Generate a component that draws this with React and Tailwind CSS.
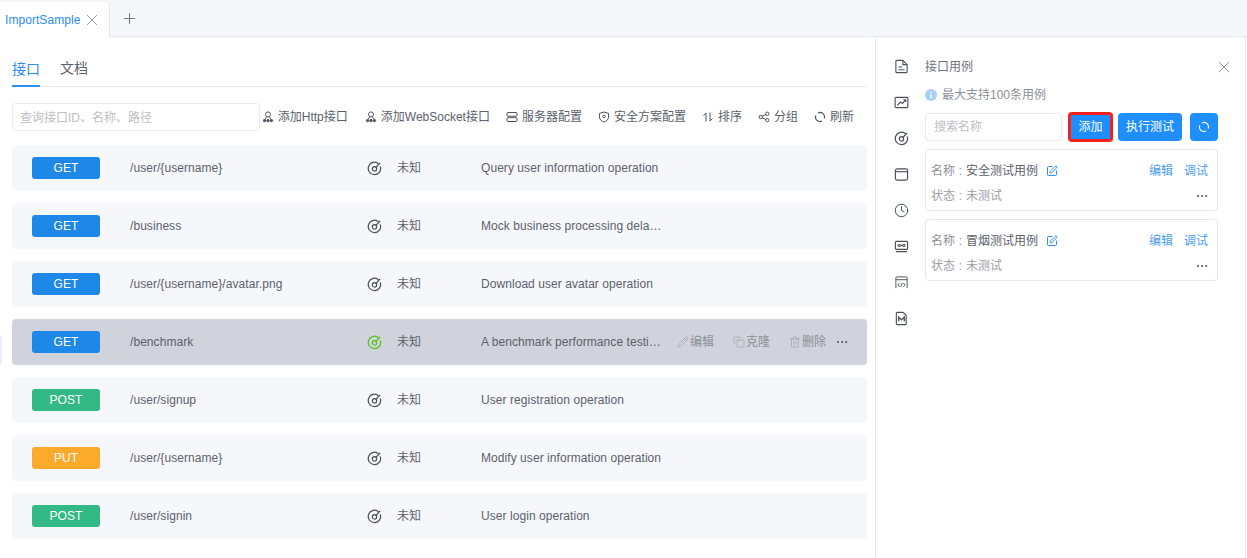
import { X, Plus, Pencil, Copy, Trash2, Ellipsis, SquarePen, Clock } from "lucide-react";

const FONT = "font-['Liberation_Sans','Noto_Sans_CJK_SC',sans-serif]";

const rows = [
  { method: "GET", path: "/user/{username}", desc: "Query user information operation" },
  { method: "GET", path: "/business", desc: "Mock business processing dela…" },
  { method: "GET", path: "/user/{username}/avatar.png", desc: "Download user avatar operation" },
  { method: "GET", path: "/benchmark", desc: "A benchmark performance testi…", active: true },
  { method: "POST", path: "/user/signup", desc: "User registration operation" },
  { method: "PUT", path: "/user/{username}", desc: "Modify user information operation" },
  { method: "POST", path: "/user/signin", desc: "User login operation" },
];

const methodColors = { GET: "bg-[#1e88e8]", POST: "bg-[#33b985]", PUT: "bg-[#fbaa2c]" };

function Target({ className }) {
  return (
    <svg viewBox="0 0 16 16" fill="none" stroke="currentColor" strokeWidth="1.3" strokeLinecap="round" className={className}>
      <path d="M11.8 2.6A6.6 6.6 0 1 0 14.3 6.2" />
      <circle cx="8" cy="8.4" r="2.3" />
      <path d="M9.6 6.8 13.6 2.4" />
    </svg>
  );
}

function People({ className }) {
  return (
    <svg viewBox="0 0 12 12" fill="none" stroke="currentColor" strokeWidth="1" className={className}>
      <circle cx="6" cy="3.4" r="2.5" />
      <path d="M4.6 6 3 8.4M7.4 6 9 8.4" />
      <circle cx="2.6" cy="9.6" r="1.2" fill="currentColor" />
      <circle cx="9.4" cy="9.6" r="1.2" fill="currentColor" />
      <circle cx="6" cy="9.6" r="1.2" fill="currentColor" />
    </svg>
  );
}

function ServerIcon({ className }) {
  return (
    <svg viewBox="0 0 12 12" fill="none" stroke="currentColor" strokeWidth="1" className={className}>
      <rect x="1" y="1.5" width="10" height="3.8" rx="0.8" />
      <rect x="1" y="6.7" width="10" height="3.8" rx="0.8" />
    </svg>
  );
}

function Shield({ className }) {
  return (
    <svg viewBox="0 0 12 12" fill="none" stroke="currentColor" strokeWidth="1" className={className}>
      <path d="M6 1 10.5 2.4V6c0 2.5-2 4.2-4.5 5C3.5 10.2 1.5 8.5 1.5 6V2.4Z" />
      <circle cx="6" cy="5.5" r="1.3" />
    </svg>
  );
}

function Sort({ className }) {
  return (
    <svg viewBox="0 0 12 12" fill="none" stroke="currentColor" strokeWidth="1" className={className}>
      <path d="M4 10.5V2L1.5 4.5M8 1.5V10l2.5-2.5" />
    </svg>
  );
}

function Group({ className }) {
  return (
    <svg viewBox="0 0 12 12" fill="none" stroke="currentColor" strokeWidth="1" className={className}>
      <circle cx="2.7" cy="6" r="1.7" />
      <circle cx="9.3" cy="2.8" r="1.7" />
      <circle cx="9.3" cy="9.2" r="1.7" />
      <path d="M4.2 5.2 7.8 3.5M4.2 6.8 7.8 8.5" />
    </svg>
  );
}

function Refresh({ className }) {
  return (
    <svg viewBox="0 0 12 12" fill="none" stroke="currentColor" strokeWidth="1.2" className={className}>
      <path d="M4.05 1.95A4.5 4.5 0 0 1 10.25 7.5" />
      <path d="M7.95 10.05A4.5 4.5 0 0 1 1.75 4.5" />
    </svg>
  );
}

function ToolbarItem({ icon: Icon, label, className = "" }) {
  return (
    <div className={`flex items-center gap-[4px] whitespace-nowrap ${className}`}>
      <Icon className="w-[12px] h-[12px] text-[#4f5561]" />
      <span>{label}</span>
    </div>
  );
}

function Row({ row }) {
  return (
    <div className={`flex items-center h-[46px] rounded-[4px] pl-[20px] tracking-[0.06px] ${row.active ? "bg-[#d0d3db]" : "bg-[#f6f7fb]"}`}>
      <div className={`w-[68px] h-[22px] rounded-[3px] flex items-center justify-center text-white text-[12px] ${methodColors[row.method]}`}>
        {row.method}
      </div>
      <div className="w-[267px] pl-[30px] text-[12px] text-[#5c616b]">{row.path}</div>
      <Target className={`w-[15px] h-[15px] ${row.active ? "text-[#52c41a]" : "text-[#4b4f58]"}`} />
      <div className="w-[99px] pl-[15px] text-[12px] text-[#5c616b]">未知</div>
      <div className="w-[196px] whitespace-nowrap text-[12px] text-[#5c616b]">{row.desc}</div>
      {row.active && (
        <div className="flex items-center text-[12px] text-[#8c9098]">
          <div className="flex items-center w-[56px]"><Pencil className="w-[12px] h-[12px] mr-px" strokeWidth={1} />编辑</div>
          <div className="flex items-center w-[56px]"><Copy className="w-[12px] h-[12px] mr-px" strokeWidth={1} />克隆</div>
          <div className="flex items-center w-[46px]"><Trash2 className="w-[12px] h-[12px] mr-px" strokeWidth={1} />删除</div>
          <Ellipsis className="w-[14px] h-[14px] text-[#4b4f58]" strokeWidth={1.6} />
        </div>
      )}
    </div>
  );
}

function CaseCard({ name }) {
  return (
    <div className="border border-[#e4e6eb] rounded-[4px] h-[62px] px-[5px] text-[12px]">
      <div className="flex items-center justify-between h-[41px] pr-[4px]">
        <div className="flex items-center">
          <span className="text-[#8c9098]">名称<span className="inline-block w-[11px] text-center">:</span></span>
          <span className="text-[#5c616b]">{name}</span>
          <SquarePen className="w-[12px] h-[12px] ml-[8px] text-[#2c8df4]" strokeWidth={2} />
        </div>
        <div className="flex gap-[11px] text-[#4a9df0]">
          <span>编辑</span>
          <span>调试</span>
        </div>
      </div>
      <div className="flex items-center justify-between h-[14px] -mt-[2px] pr-[3px]">
        <span className="text-[#9a9ea6]">状态<span className="inline-block w-[11px] text-center">:</span>未测试</span>
        <Ellipsis className="w-[14px] h-[14px] text-[#4b4f58]" strokeWidth={1.6} />
      </div>
    </div>
  );
}

function SideIcon({ children }) {
  return <div className="h-[36px] flex items-center justify-center text-[#4b4f58]">{children}</div>;
}

export default function App() {
  return (
    <div className={`relative h-[558px] w-[1247px] overflow-hidden bg-white ${FONT}`}>
      <div className="flex items-end h-[37px] bg-[#f6f7fb] border-b border-[#e4e7ef]">
        <div className="flex items-center gap-[3px] w-[110px] h-[35px] pl-[5px] bg-white border-r border-[#e4e7ef] rounded-tr-[4px] -mb-px">
          <span className="text-[12px] tracking-[0.06px] text-[#2c8df4]">ImportSample</span>
          <X className="w-[18px] h-[18px] text-[#6f737b]" strokeWidth={1} />
        </div>
        <div className="h-[35px] flex items-center pl-[11px]">
          <Plus className="w-[17px] h-[17px] text-[#6f737b]" strokeWidth={1.4} />
        </div>
      </div>

      <div className="flex h-[521px]">
        <div className="w-[875px] px-[12px]">
          <div className="flex gap-[20px] h-[50px] w-[855px] items-end border-b border-[#e8eaf0] text-[14px]">
            <div className="h-[36px] w-[28px] border-b-2 border-[#2c8df4] text-[#2c8df4] -mb-px pt-[8px]">接口</div>
            <div className="h-[36px] text-[#5c616b] pt-[8px]">文档</div>
          </div>

          <div className="flex items-center justify-between mt-[16px] h-[28px] w-[855px] pr-[13px]">
            <div className="w-[248px] h-[28px] border border-[#e8eaf0] rounded-[4px] px-[7px] pt-px flex items-center text-[12px] text-[#bdbfc4]">
              查询接口ID、名称、路径
            </div>
            <div className="flex items-center gap-[16px] text-[12px] text-[#5c616b]">
              <ToolbarItem icon={People} label="添加Http接口" className="mr-[1px]" />
              <ToolbarItem icon={People} label="添加WebSocket接口" />
              <ToolbarItem icon={ServerIcon} label="服务器配置" />
              <ToolbarItem icon={Shield} label="安全方案配置" />
              <ToolbarItem icon={Sort} label="排序" />
              <ToolbarItem icon={Group} label="分组" />
              <ToolbarItem icon={Refresh} label="刷新" />
            </div>
          </div>

          <div className="flex flex-col gap-[12px] mt-[14px] w-[855px]">
            {rows.map((row, i) => <Row key={i} row={row} />)}
          </div>
        </div>

        <div className="flex w-[370px] border-l border-[#e4e7ef]">
          <div className="w-[49px] pl-px pt-[11px] flex flex-col">
            <SideIcon>
              <svg viewBox="0 0 16 16" fill="none" stroke="currentColor" strokeWidth="1.2" className="w-[15px] h-[15px]">
                <path d="M3 1.5h6.5L14 6v7.500a1 1 0 0 1-1 1H3a1 1 0 0 1-1-1v-11a1 1 0 0 1 1-1Z" />
                <path d="M9.500 1.500V6H14M4.800 8.500h4M4.800 11.500h6.500" />
              </svg>
            </SideIcon>
            <SideIcon>
              <svg viewBox="0 0 16 16" fill="none" stroke="currentColor" strokeWidth="1.2" className="w-[15px] h-[15px]">
                <rect x="1.2" y="2.5" width="13.6" height="11" rx="1" />
                <path d="M3.5 11 7 7.500l2 1.500 3.500-4M10 5h2.500v2.500" />
              </svg>
            </SideIcon>
            <SideIcon><Target className="w-[15px] h-[15px]" /></SideIcon>
            <SideIcon>
              <svg viewBox="0 0 16 16" fill="none" stroke="currentColor" strokeWidth="1.2" className="w-[15px] h-[15px]">
                <rect x="1.5" y="2" width="13" height="12" rx="2" />
                <path d="M1.5 5h13" />
              </svg>
            </SideIcon>
            <SideIcon><Clock className="w-[15px] h-[15px]" strokeWidth={1.6} /></SideIcon>
            <SideIcon>
              <svg viewBox="0 0 16 16" fill="none" stroke="currentColor" strokeWidth="1.2" className="w-[15px] h-[15px]">
                <rect x="1.5" y="2.5" width="13" height="8.5" rx="1" />
                <circle cx="5.5" cy="6.8" r="1.2" />
                <circle cx="10.5" cy="6.8" r="1.2" />
                <path d="M6.8 6.8h2.400M2 13.500h12" />
              </svg>
            </SideIcon>
            <SideIcon>
              <svg viewBox="0 0 16 16" fill="none" stroke="currentColor" strokeWidth="1" className="w-[15px] h-[15px]">
                <path d="M2 14V3a1 1 0 0 1 1-1h10a1 1 0 0 1 1 1v11M2 5h12" />
                <path d="M6 8.500 4.300 10.500 6 12.500M10 8.500l1.700 2-1.700 2M8.800 8.300l-1.600 4.400" />
              </svg>
            </SideIcon>
            <SideIcon>
              <svg viewBox="0 0 16 16" fill="none" stroke="currentColor" strokeWidth="1.2" className="w-[15px] h-[15px]">
                <path d="M3.5 1.5h6l3.500 3v9a1 1 0 0 1-1 1H3.500a1 1 0 0 1-1-1v-11a1 1 0 0 1 1-1Z" />
                <path d="M5 11V6.500l3 3 3-3V11" strokeWidth="1.4" />
              </svg>
            </SideIcon>
          </div>

          <div className="w-[293px] pt-[22px]">
            <div className="flex items-center justify-between h-[16px] text-[12px] text-[#6f737b]">
              <span>接口用例</span>
              <X className="w-[20px] h-[20px] -mr-[16px] text-[#6f737b]" strokeWidth={0.9} />
            </div>
            <div className="flex items-center gap-[5px] mt-[12px] h-[16px] text-[12px] text-[#8c9098]">
              <svg viewBox="0 0 12 12" className="w-[12px] h-[12px]">
                <circle cx="6" cy="6" r="6" fill="#a8cff5" />
                <path d="M6 5.200V9M6 2.800V4" stroke="#fff" strokeWidth="1.5" />
              </svg>
              <span>最大支持100条用例</span>
            </div>
            <div className="flex items-center mt-[9px] h-[30px]">
              <div className="w-[137px] h-[28px] border border-[#e8eaf0] rounded-[4px] px-[8px] flex items-center text-[12px] text-[#bdbfc4]">搜索名称</div>
              <div className="ml-[6px] w-[45px] h-[30px] rounded-[4px] bg-[#1f8fff] border-[3px] border-[#f5221b] flex items-center justify-center text-[12px] text-white">添加</div>
              <div className="ml-[5px] w-[64px] h-[28px] rounded-[4px] bg-[#1f8fff] flex items-center justify-center text-[12px] text-white">执行测试</div>
              <div className="ml-[8px] w-[28px] h-[28px] rounded-[4px] bg-[#1f8fff] flex items-center justify-center text-white"><Refresh className="w-[12px] h-[12px]" /></div>
            </div>
            <div className="flex flex-col gap-[8px] mt-[7px]">
              <CaseCard name="安全测试用例" />
              <CaseCard name="冒烟测试用例" />
            </div>
          </div>
        </div>
      </div>

      <div className="absolute left-0 top-[335px] w-[2px] h-[30px] bg-[#eceef3] rounded-r-[2px]" />
      <div className="absolute right-[1px] top-[37px] bottom-0 w-px bg-[#e4e7ef]" />
    </div>
  );
}
